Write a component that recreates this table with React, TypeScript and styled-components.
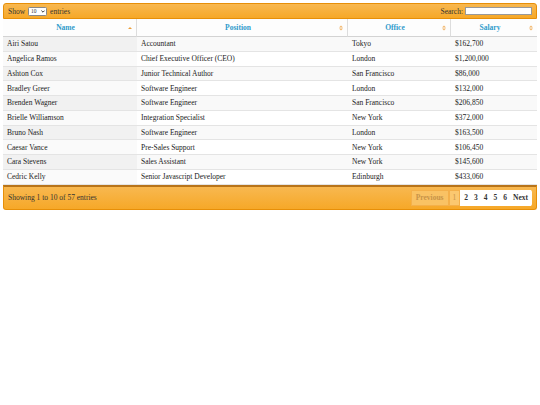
import React from "react";
import styled, { createGlobalStyle } from "styled-components";

const Global = createGlobalStyle`
  html, body { margin: 0; padding: 0; background: #fff; }
  body { font-family: "Liberation Serif", "Times New Roman", serif; font-size: 7.5px; color: #222; }
`;

const Wrapper = styled.div`
  margin: 3px;
  width: 534px;
`;

const Toolbar = styled.div<{ $bottom?: boolean }>`
  display: flex;
  align-items: center;
  justify-content: space-between;
  box-sizing: border-box;
  background: linear-gradient(#f8b850, #f6a828);
  border: 1px solid #e78f08;
  color: #333;
  padding: 0 4px;
  height: ${(p) => (p.$bottom ? "25px" : "16px")};
  border-radius: ${(p) => (p.$bottom ? "0 0 3px 3px" : "3px 3px 0 0")};
  ${(p) => (p.$bottom ? "border-top: 2px solid #b8741a;" : "")}
`;

const Group = styled.div`
  display: flex;
  align-items: center;
  gap: 2px;
`;

const Select = styled.span`
  display: inline-flex;
  align-items: center;
  justify-content: space-between;
  box-sizing: border-box;
  width: 19px;
  height: 9px;
  background: #fff;
  border: 1px solid #888;
  border-radius: 1.5px;
  font-size: 5.5px;
  padding: 0 1.5px 0 2px;
  margin: 0 1px;
`;

const SearchInput = styled.span`
  display: inline-block;
  box-sizing: border-box;
  width: 67px;
  height: 8px;
  background: #fff;
  border: 1px solid #999;
`;

const HeaderRow = styled.div`
  display: grid;
  grid-template-columns: 134px 211px 103px 86px;
  height: 18px;
`;

const Th = styled.div`
  position: relative;
  display: flex;
  align-items: center;
  justify-content: center;
  box-sizing: border-box;
  background: #fdfdfd;
  border-right: 1px solid #ddd;
  border-bottom: 1px solid #d3d3d3;
  color: #2f9bcc;
  font-weight: bold;
  padding-right: 8px;
  &:last-child { border-right: none; }
`;

const SortIcon = styled.span`
  position: absolute;
  right: 4px;
  top: 50%;
  transform: translateY(-50%);
  display: flex;
`;

const Row = styled.div<{ $odd: boolean }>`
  display: grid;
  grid-template-columns: 134px 211px 103px 86px;
  height: 14.75px;
  box-sizing: border-box;
  border-bottom: 1px solid #e4e4e4;
  background: ${(p) => (p.$odd ? "#f9f9f9" : "#fff")};
  &:last-child { border-bottom: none; }
`;

const Td = styled.div<{ $sorted?: boolean; $odd?: boolean }>`
  display: flex;
  align-items: center;
  padding-left: 4px;
  white-space: nowrap;
  background: ${(p) => (p.$sorted ? (p.$odd ? "#f1f1f1" : "#fafafa") : "transparent")};
`;

const Pager = styled.div`
  display: flex;
  align-items: stretch;
  height: 16px;
`;

const PageBtn = styled.span<{ $kind: "disabled" | "current" | "normal" }>`
  display: flex;
  align-items: center;
  padding: 0 ${(p) => (p.$kind === "disabled" ? "4px" : "3px")};
  color: ${(p) => (p.$kind === "normal" ? "#333" : "#c89448")};
  background: ${(p) =>
    p.$kind === "normal" ? "#fff" : p.$kind === "current" ? "#fbc870" : "#f9c264"};
  border: ${(p) => (p.$kind === "normal" ? "none" : "1px solid #f4b04a")};
  font-weight: ${(p) => (p.$kind === "current" ? "normal" : "bold")};
`;

const WhiteGroup = styled.div`
  display: flex;
  background: #fff;
  padding: 0 1px;
  border-radius: 0 2px 2px 0;
`;

function UpDown() {
  return (
    <svg width="4" height="6" viewBox="0 0 4 6">
      <path d="M0 2.5 L2 0.5 L4 2.5Z" fill="#f1b56a" />
      <path d="M0 3.5 L2 5.5 L4 3.5Z" fill="#f1b56a" />
    </svg>
  );
}

function Up() {
  return (
    <svg width="4" height="4" viewBox="0 0 4 4">
      <path d="M0 3 L2 1 L4 3Z" fill="#ec9f3c" />
    </svg>
  );
}

function Chevron() {
  return (
    <svg width="4" height="3" viewBox="0 0 4 3">
      <path d="M0.4 0.6 L2 2.2 L3.6 0.6" fill="none" stroke="#222" strokeWidth="0.9" />
    </svg>
  );
}

const data: [string, string, string, string][] = [
  ["Airi Satou", "Accountant", "Tokyo", "$162,700"],
  ["Angelica Ramos", "Chief Executive Officer (CEO)", "London", "$1,200,000"],
  ["Ashton Cox", "Junior Technical Author", "San Francisco", "$86,000"],
  ["Bradley Greer", "Software Engineer", "London", "$132,000"],
  ["Brenden Wagner", "Software Engineer", "San Francisco", "$206,850"],
  ["Brielle Williamson", "Integration Specialist", "New York", "$372,000"],
  ["Bruno Nash", "Software Engineer", "London", "$163,500"],
  ["Caesar Vance", "Pre-Sales Support", "New York", "$106,450"],
  ["Cara Stevens", "Sales Assistant", "New York", "$145,600"],
  ["Cedric Kelly", "Senior Javascript Developer", "Edinburgh", "$433,060"],
];

export default function App() {
  return (
    <Wrapper>
      <Global />
      <Toolbar>
        <Group>
          Show
          <Select>
            <span>10</span>
            <Chevron />
          </Select>
          entries
        </Group>
        <Group>
          Search:
          <SearchInput />
        </Group>
      </Toolbar>
      <HeaderRow>
        {["Name", "Position", "Office", "Salary"].map((h, i) => (
          <Th key={h}>
            {h}
            <SortIcon>{i === 0 ? <Up /> : <UpDown />}</SortIcon>
          </Th>
        ))}
      </HeaderRow>
      {data.map((r, i) => {
        const odd = i % 2 === 0;
        return (
          <Row key={r[0]} $odd={odd}>
            <Td $sorted $odd={odd}>{r[0]}</Td>
            <Td>{r[1]}</Td>
            <Td>{r[2]}</Td>
            <Td>{r[3]}</Td>
          </Row>
        );
      })}
      <Toolbar $bottom>
        <span>Showing 1 to 10 of 57 entries</span>
        <Pager>
          <PageBtn $kind="disabled">Previous</PageBtn>
          <PageBtn $kind="current">1</PageBtn>
          <WhiteGroup>
            {["2", "3", "4", "5", "6", "Next"].map((p) => (
              <PageBtn key={p} $kind="normal">{p}</PageBtn>
            ))}
          </WhiteGroup>
        </Pager>
      </Toolbar>
    </Wrapper>
  );
}
